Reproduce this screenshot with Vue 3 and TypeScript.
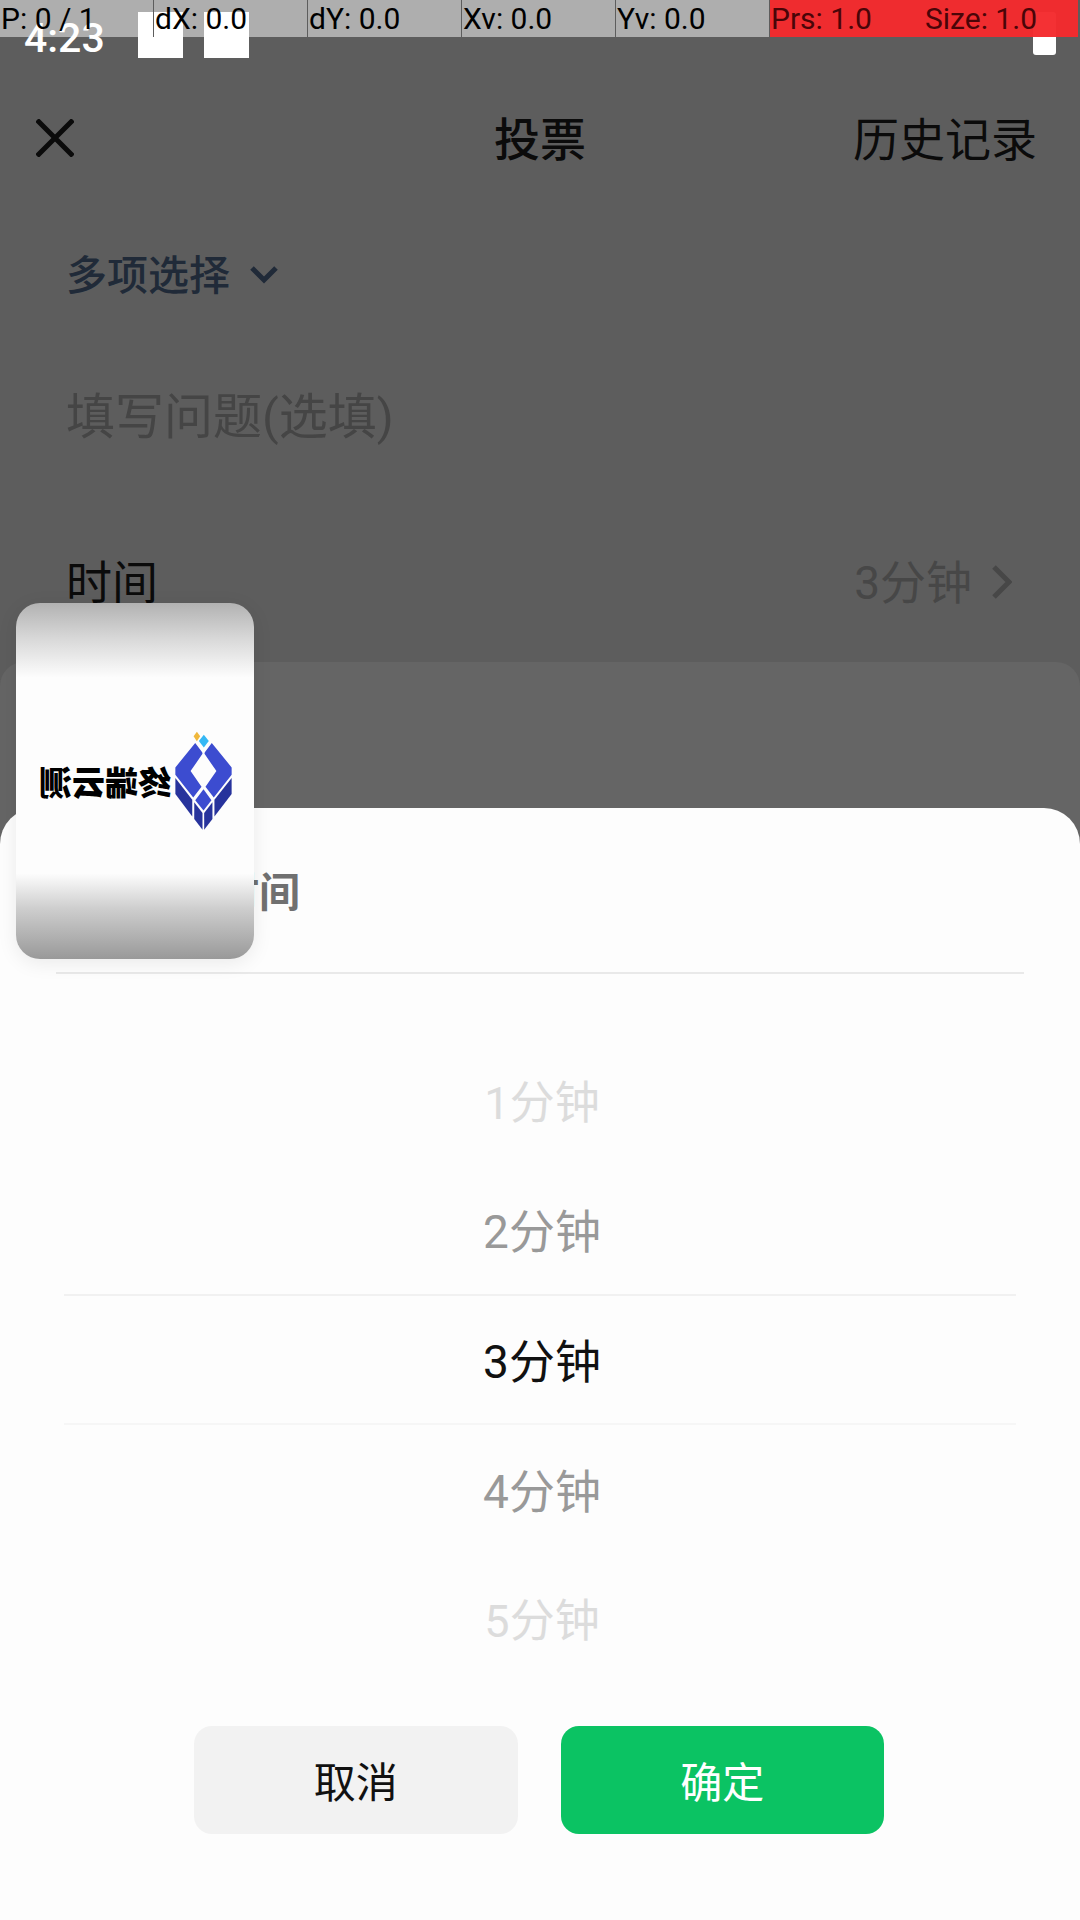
<script setup lang="ts">
import { ref } from 'vue'

interface Option {
  minutes: number
  tone: 'far' | 'near' | 'current'
}

const readouts: string[] = ['P: 0 / 1', 'dX: 0.0', 'dY: 0.0', 'Xv: 0.0', 'Yv: 0.0', 'Prs: 1.0', 'Size: 1.0']

const options: Option[] = [
  { minutes: 1, tone: 'far' },
  { minutes: 2, tone: 'near' },
  { minutes: 3, tone: 'current' },
  { minutes: 4, tone: 'near' },
  { minutes: 5, tone: 'far' },
]

const selected = ref<number>(3)
const question = ref<string>('')
</script>

<template>
  <div class="screen">
    <div class="status">
      <span class="clock">4:23</span>
      <i class="notice"></i>
      <i class="notice"></i>
      <i class="battery"></i>
    </div>

    <header class="header">
      <button class="close" type="button" aria-label="关闭">
        <svg viewBox="0 0 38 38" width="38" height="38"><path d="M1 1L37 37M37 1L1 37" /></svg>
      </button>
      <h1>投票</h1>
      <button class="history" type="button">历史记录</button>
    </header>

    <main class="form">
      <button class="kind" type="button">
        <span>多项选择</span>
        <svg viewBox="0 0 28 18" width="28" height="18"><path d="M2 2L14 14L26 2" /></svg>
      </button>
      <input v-model="question" class="question" type="text" placeholder="填写问题(选填)" aria-label="填写问题" />
      <button class="time" type="button">
        <span>时间</span>
        <span class="value">{{ selected }}分钟</span>
        <svg viewBox="0 0 20 34" width="20" height="34"><path d="M2 2L17 17L2 32" /></svg>
      </button>
      <div class="panel"></div>
    </main>

    <section class="sheet" role="dialog" aria-labelledby="sheet-title">
      <h2 id="sheet-title">选择投票时间</h2>
      <div class="picker" role="radiogroup" aria-labelledby="sheet-title">
        <label v-for="o in options" :key="o.minutes" class="option" :class="o.tone">
          <input v-model="selected" type="radio" name="minutes" :value="o.minutes" />
          <span>{{ o.minutes }}分钟</span>
        </label>
      </div>
      <div class="actions">
        <button class="cancel" type="button">取消</button>
        <button class="confirm" type="button">确定</button>
      </div>
    </section>

    <aside class="floating">
      <span class="wordmark">终端云测</span>
      <svg class="gem" viewBox="524 576 172 302" width="57" height="100">
        <path fill="#f0b83c" d="M590 578L600 592L590 607L580 592Z" />
        <path fill="#35b8f5" d="M611 587L626 606L611 626L596 606Z" />
        <path fill="#3c4cd0" d="M585 612L606 640L607 645L571 697L604 744L579 777L525 708V686Z" />
        <path fill="#3c4cd0" d="M635 612L695 686V708L641 777L616 744L649 697L613 645L614 640Z" />
        <path fill="#3c4cd0" d="M610 752L634 785L610 816L585 785Z" />
        <path fill="#27339c" d="M525 718L576 784V834L525 766Z" />
        <path fill="#27339c" d="M695 718L643 784V834L695 766Z" />
        <path fill="#27339c" d="M582 791L607 824V874L582 842Z" />
        <path fill="#27339c" d="M637 791L612 824V874L637 842Z" />
      </svg>
    </aside>

    <div class="pointer">
      <span v-for="text in readouts" :key="text">{{ text }}</span>
    </div>
  </div>
</template>

<style>
body {
  margin: 0;
  background: #5d5d5d;
}
</style>

<style scoped>
.screen {
  position: relative;
  display: flex;
  flex-direction: column;
  min-height: 100vh;
  overflow: hidden;
  background: #5d5d5d;
  color: #0b0b0b;
  font-family: Roboto, "Noto Sans CJK SC", sans-serif;
}
button,
input {
  margin: 0;
  padding: 0;
  border: 0;
  background: none;
  color: inherit;
  font: inherit;
}
svg {
  display: block;
  flex: none;
}
svg path:not([fill]) {
  fill: none;
  stroke: currentColor;
  stroke-width: 5;
}

.status {
  display: flex;
  align-items: flex-start;
  height: 62px;
  padding: 12px 24px 0;
  color: #fff;
}
.clock {
  width: 114px;
  font-size: 41px;
  font-weight: 500;
  line-height: 52px;
}
.notice {
  width: 45px;
  height: 46px;
  margin-right: 21px;
  background: #fff;
}
.battery {
  width: 23px;
  height: 43px;
  margin-left: auto;
  border-radius: 3px;
  background: #fff;
}

.header {
  display: grid;
  grid-template-columns: 1fr auto 1fr;
  align-items: center;
  height: 128px;
  padding: 0 36px;
}
.header h1 {
  margin: 0;
  padding-bottom: 4px;
  font-size: 46px;
  font-weight: 500;
}
.history {
  justify-self: end;
  padding: 0 7px 4px 0;
  font-size: 46px;
}
.close {
  justify-self: start;
}

.form {
  display: flex;
  flex: 1;
  flex-direction: column;
}
.kind {
  display: flex;
  align-items: center;
  gap: 20px;
  height: 142px;
  padding: 0 66px;
  color: #202a38;
  font-size: 41px;
  font-weight: 500;
}
.kind span {
  padding-bottom: 2px;
}
.kind svg {
  padding-top: 4px;
}
.question {
  height: 146px;
  padding: 0 66px;
  font-size: 49px;
}
.question::placeholder {
  color: #454545;
  opacity: 1;
}
.time {
  display: flex;
  align-items: center;
  gap: 20px;
  box-sizing: border-box;
  height: 172px;
  padding: 12px 68px 0 66px;
  font-size: 46px;
}
.time span {
  padding-bottom: 6px;
}
.value {
  margin-left: auto;
}
.value,
.time svg {
  color: #474747;
}
.panel {
  flex: 1;
  border-radius: 24px 24px 0 0;
  background: #656565;
}

.sheet {
  position: absolute;
  right: 0;
  bottom: 0;
  left: 0;
  border-radius: 36px 36px 0 0;
  background: #fdfdfd;
}
.sheet h2 {
  margin: 0 56px;
  padding-top: 6px;
  border-bottom: 2px solid #e9e9e9;
  color: #707070;
  font-size: 41px;
  font-weight: 700;
  line-height: 158px;
  text-indent: -2px;
}
.picker {
  padding: 62px 64px 43px;
}
.option {
  display: flex;
  align-items: center;
  justify-content: center;
  box-sizing: border-box;
  height: 129px;
  padding: 0 0 3px 4px;
  font-size: 46px;
}
.option input {
  position: absolute;
  opacity: 0;
}
.far {
  color: #dcdcdc;
  font-size: 45px;
}
.near {
  color: #999;
}
.current {
  height: 131px;
  border-top: 2px solid #f1f1f1;
  border-bottom: 2px solid #f6f6f6;
  color: #111;
}
.actions {
  display: flex;
  justify-content: center;
  gap: 43px;
  padding: 0 2px 86px 0;
}
.actions button {
  width: 30%;
  height: 108px;
  padding-bottom: 2px;
  border-radius: 18px;
  font-size: 42px;
}
.cancel {
  background: #f2f2f2;
  color: #111;
}
.confirm {
  background: #0bc363;
  color: #fff;
}

.floating {
  position: absolute;
  top: 603px;
  left: 16px;
  display: flex;
  align-items: center;
  justify-content: center;
  gap: 4px;
  box-sizing: border-box;
  width: 238px;
  height: 356px;
  border-radius: 24px;
  background: linear-gradient(#b2b2b2, #d8d8d8 10%, #fdfdfd 21%, #fdfdfd 76%, #cdcdcd 86%, #999);
  box-shadow: 0 4px 20px rgba(0, 0, 0, 0.08);
}
.wordmark {
  color: #000;
  font-family: "Noto Sans CJK SC", sans-serif;
  font-size: 33px;
  font-weight: 900;
  line-height: 48px;
  transform: scaleX(-1);
}

.pointer {
  position: absolute;
  top: 0;
  right: 2px;
  left: 0;
  display: grid;
  grid-template-columns: repeat(7, 1fr);
  font-size: 30px;
  line-height: 37px;
}
.pointer span {
  box-sizing: border-box;
  padding-left: 1px;
  border-right: 1px solid #5d5d5d;
  background: rgba(255, 255, 255, 0.5);
  background-clip: padding-box;
  color: #000;
  white-space: nowrap;
}
.pointer span:nth-child(n + 6) {
  border-right: 0;
  background: rgba(244, 42, 45, 0.97);
  color: #4a0508;
}
</style>
